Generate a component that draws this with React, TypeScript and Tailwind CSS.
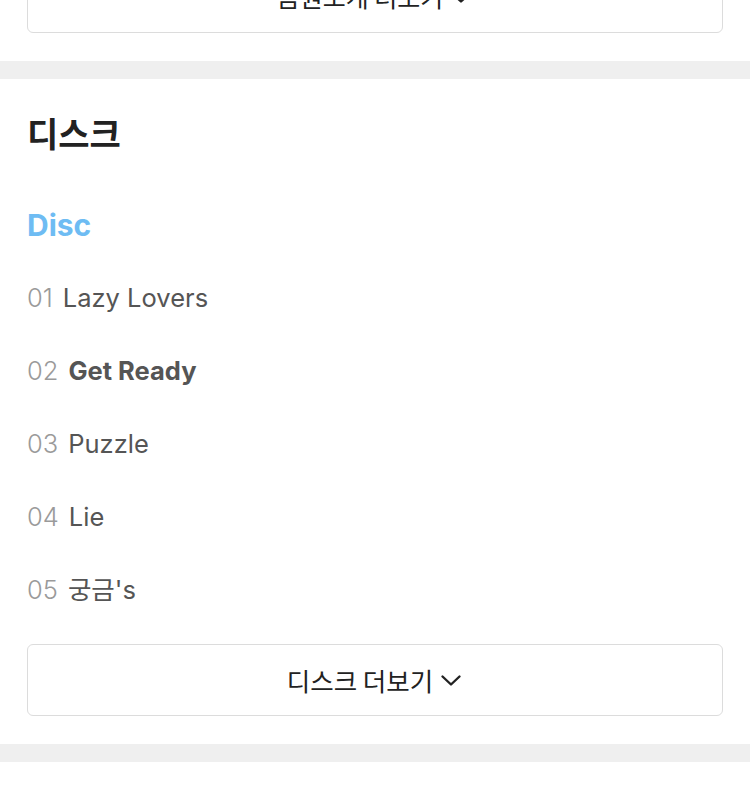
import React from "react";

const Chevron = () => (
  <svg width="24" height="24" viewBox="0 0 24 24" fill="none" stroke="#222" strokeWidth="2.4" strokeLinecap="round" strokeLinejoin="round" className="ml-[6px]">
    <path d="M3.5 8.5l8.5 8 8.5-8" />
  </svg>
);

const tracks = [
  { no: "01", title: "Lazy Lovers", bold: false },
  { no: "02", title: "Get Ready", bold: true },
  { no: "03", title: "Puzzle", bold: false },
  { no: "04", title: "Lie", bold: false },
  { no: "05", title: "궁금's", bold: false },
];

export default function App() {
  return (
    <div className="w-[750px] h-[786px] overflow-hidden bg-white" style={{ fontFamily: 'Inter, "Noto Sans CJK KR", sans-serif' }}>
      <div className="px-[27px] pb-[28px]">
        <div className="-mt-[39px] h-[72px] border border-[#dcdcdc] rounded-[6px] flex items-center justify-center text-[25px] text-[#222]" style={{ fontFamily: '"Noto Sans CJK KR", sans-serif' }}>
          음원소개 더보기
          <Chevron />
        </div>
      </div>
      <div className="h-[18px] bg-[#efefef]" />
      <div className="px-[27px] pt-[32px] pb-[28px]">
        <h2 className="text-[34px] font-bold text-[#222] leading-[44px]" style={{ fontFamily: '"Noto Sans CJK KR", sans-serif' }}>디스크</h2>
        <div className="mt-[50px] text-[30px] font-bold text-[#6ebcf3] leading-[40px]">Disc</div>
        <div className="mt-[16px] flex flex-col">
          {tracks.map((t) => (
            <div key={t.no} className="h-[73px] flex items-center text-[25.5px] leading-none">
              <span className="text-[#9a9a9a] font-light">{t.no}</span>
              <span className={"ml-[10px] text-[#555] " + (t.bold ? "font-bold" : "")}>{t.title}</span>
            </div>
          ))}
        </div>
        <div className="mt-[18px] h-[72px] border border-[#dcdcdc] rounded-[6px] flex items-center justify-center text-[25.5px] text-[#222]" style={{ fontFamily: '"Noto Sans CJK KR", sans-serif' }}>
          디스크 더보기
          <Chevron />
        </div>
      </div>
      <div className="h-[18px] bg-[#efefef]" />
    </div>
  );
}
